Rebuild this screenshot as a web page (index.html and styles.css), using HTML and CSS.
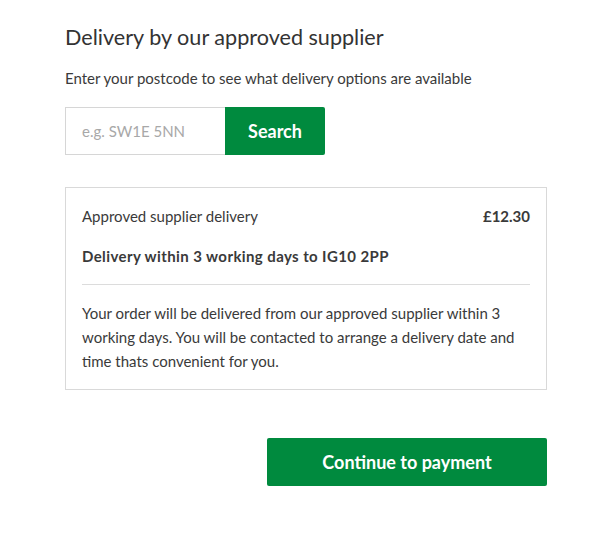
FILE: index.html
```html
<!DOCTYPE html>
<html lang="en">
<head>
<meta charset="utf-8">
<title>Delivery</title>
<link rel="stylesheet" href="styles.css">
</head>
<body>
<main class="page">
  <h1 class="title">Delivery by our approved supplier</h1>
  <p class="intro">Enter your postcode to see what delivery options are available</p>
  <form class="search">
    <input class="search-input" type="text" placeholder="e.g. SW1E 5NN">
    <button class="search-btn" type="button">Search</button>
  </form>
  <section class="card">
    <div class="card-row">
      <span class="card-label">Approved supplier delivery</span>
      <span class="card-price">£12.30</span>
    </div>
    <p class="card-sub">Delivery within 3 working days to IG10 2PP</p>
    <hr class="card-rule">
    <p class="card-text">Your order will be delivered from our approved supplier within 3 working days. You will be contacted to arrange a delivery date and time thats convenient for you.</p>
  </section>
  <div class="actions">
    <button class="continue-btn" type="button">Continue to payment</button>
  </div>
</main>
</body>
</html>
```

FILE: styles.css
```css
* { box-sizing: border-box; }
html, body { margin: 0; background: #fff; }
body {
  font-family: "Lato", "Open Sans", sans-serif;
  color: #3a3a3a;
}
.page {
  width: 482px;
  margin-left: 65px;
  padding-top: 21px;
}
.title {
  margin: 0;
  font-size: 21.6px;
  font-weight: 400;
  line-height: 32px;
  color: #333;
}
.intro {
  margin: 15px 0 0;
  font-size: 15px;
  line-height: 20px;
}
.search {
  display: flex;
  margin-top: 19px;
  height: 48px;
}
.search-input {
  width: 160px;
  height: 48px;
  border: 1px solid #d6d6d6;
  border-right: none;
  padding: 0 16px;
  font-family: inherit;
  font-size: 15px;
  color: #333;
  outline: none;
}
.search-input::placeholder { color: #a8a8a8; }
.search-btn {
  width: 100px;
  height: 48px;
  border: none;
  border-radius: 0 2px 2px 0;
  background: #008a3e;
  color: #fff;
  font-family: inherit;
  font-size: 18px;
  font-weight: 700;
}
.card {
  margin-top: 32px;
  border: 1px solid #d9d9d9;
  padding: 16px 16px 16px;
}
.card-row {
  display: flex;
  justify-content: space-between;
  font-size: 15px;
  line-height: 24px;
}
.card-price { font-weight: 700; }
.card-sub {
  margin: 18px 0 0;
  font-size: 15px;
  line-height: 20px;
  font-weight: 700;
  letter-spacing: 0.4px;
}
.card-rule {
  margin: 18px 0 0;
  border: 0;
  border-top: 1px solid #dcdcdc;
}
.card-text {
  margin: 16px 0 0;
  font-size: 15px;
  line-height: 24px;
}
.actions {
  display: flex;
  justify-content: flex-end;
  margin-top: 48px;
}
.continue-btn {
  width: 280px;
  height: 48px;
  border: none;
  border-radius: 2px;
  background: #008a3e;
  color: #fff;
  font-family: inherit;
  font-size: 18px;
  font-weight: 700;
}
```
